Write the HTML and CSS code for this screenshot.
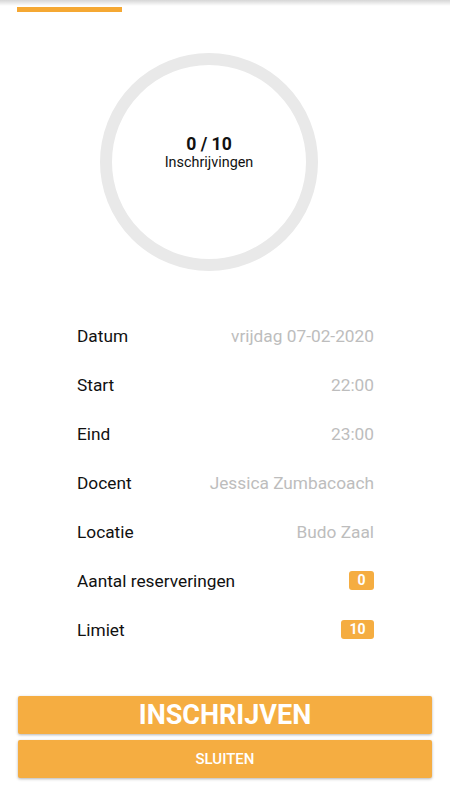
FILE: index.html
```
<!DOCTYPE html>
<html>
<head>
<meta charset="utf-8">
<link rel="stylesheet" href="styles.css">
</head>
<body>
<div class="page">
  <div class="topshadow"></div>
  <div class="tabbar"><div class="indicator"></div></div>
  <div class="ringwrap">
    <div class="ring">
      <div class="count">0 / 10</div>
      <div class="countlabel">Inschrijvingen</div>
    </div>
  </div>
  <div class="details">
    <div class="row"><span class="label">Datum</span><span class="value">vrijdag 07-02-2020</span></div>
    <div class="row"><span class="label">Start</span><span class="value">22:00</span></div>
    <div class="row"><span class="label">Eind</span><span class="value">23:00</span></div>
    <div class="row"><span class="label">Docent</span><span class="value">Jessica Zumbacoach</span></div>
    <div class="row"><span class="label">Locatie</span><span class="value">Budo Zaal</span></div>
    <div class="row"><span class="label">Aantal reserveringen</span><span class="badge">0</span></div>
    <div class="row"><span class="label">Limiet</span><span class="badge">10</span></div>
  </div>
  <div class="actions">
    <button class="btn btn-main">INSCHRIJVEN</button>
    <button class="btn btn-close">SLUITEN</button>
  </div>
</div>
</body>
</html>
```
FILE: styles.css
```
* { box-sizing: border-box; }
html, body { margin: 0; padding: 0; background: #fff; }
body { font-family: Roboto, "Noto Sans", sans-serif; color: #111; }
.page { width: 450px; height: 800px; position: relative; overflow: hidden; }
.topshadow {
  position: absolute; top: 0; left: 0; right: 0; height: 6px;
  background: linear-gradient(to bottom, rgba(0,0,0,0.16), rgba(0,0,0,0));
}
.tabbar { padding-top: 7px; padding-left: 17px; height: 12px; }
.indicator { width: 105px; height: 5px; background: #f5a833; }
.ringwrap { margin-top: 41px; padding-left: 100px; }
.ring {
  width: 218px; height: 218px; border-radius: 50%;
  border: 12px solid #e9e9e9;
  display: flex; flex-direction: column; align-items: center; justify-content: center;
  padding-bottom: 20px;
}
.count { font-weight: 700; font-size: 17.6px; line-height: 20px; color: #111; }
.countlabel { font-size: 14.4px; line-height: 17px; color: #111; }
.details { margin-top: 40px; padding-left: 77px; width: 374px; }
.row {
  height: 49px; display: flex; align-items: center; justify-content: space-between;
  font-size: 17.3px;
}
.label { color: #111; }
.value { color: #bdbdbd; }
.badge {
  background: #f5ad41; color: #fff; font-weight: 700; font-size: 14px;
  height: 19px; line-height: 19px; padding: 0 8.5px; border-radius: 3px;
}
.actions {
  position: absolute; left: 18px; right: 18px; top: 696px;
  display: flex; flex-direction: column; gap: 6px;
}
.btn {
  border: none; background: #f5ad41; color: #fff; height: 38px; width: 100%;
  border-radius: 2px; font-family: Roboto, sans-serif;
  box-shadow: 0 1px 3px rgba(0,0,0,0.3);
}
.btn-main { font-size: 27px; font-weight: 700; }
.btn-close { font-size: 15px; font-weight: 500; }
```
